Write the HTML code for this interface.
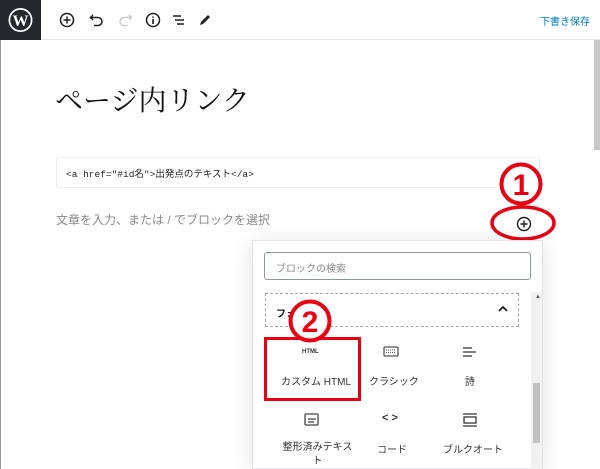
<!DOCTYPE html>
<html><head><meta charset="utf-8"><style>
*{margin:0;padding:0;box-sizing:border-box}
body{width:600px;height:469px;overflow:hidden;background:#fff;position:relative;font-family:"Liberation Sans","Noto Sans CJK JP",sans-serif;color:#1e1e1e}
.abs{position:absolute}
.top{left:0;top:0;width:600px;height:40px;border-bottom:1px solid #e2e4e7;background:#fff}
.logo{left:0;top:0;width:41px;height:40px;background:#23282d}
.ic{top:11px;width:18px;height:18px}
</style></head><body>
<div class="abs top"></div>
<div class="abs logo"><svg width="41" height="40"><circle cx="20.5" cy="20" r="12" fill="#fff"/><circle cx="20.5" cy="20" r="10.3" fill="#23282d"/><text x="20.5" y="26" text-anchor="middle" font-family="Liberation Serif" font-weight="bold" font-size="16" fill="#fff">W</text></svg></div>
<svg class="abs ic" style="left:58px" viewBox="0 0 18 18"><circle cx="9" cy="9" r="6.5" fill="none" stroke="#1e1e1e" stroke-width="1.5"/><path d="M9 5.5v7M5.5 9h7" stroke="#1e1e1e" stroke-width="1.5"/></svg>
<svg class="abs ic" style="left:88px" viewBox="0 0 18 18"><path d="M5 4L2.5 6.5 5 9M3 6.5h7a4 4 0 010 8H6" fill="none" stroke="#1e1e1e" stroke-width="1.5"/></svg>
<svg class="abs ic" style="left:116px" viewBox="0 0 18 18"><path d="M13 4l2.5 2.5L13 9M15 6.5H8a4 4 0 000 8h4" fill="none" stroke="#ccc" stroke-width="1.5"/></svg>
<svg class="abs ic" style="left:144px" viewBox="0 0 18 18"><circle cx="9" cy="9" r="6.5" fill="none" stroke="#1e1e1e" stroke-width="1.5"/><path d="M9 8v5M9 5.5v1.3" stroke="#1e1e1e" stroke-width="1.6"/></svg>
<svg class="abs ic" style="left:170px" viewBox="0 0 18 18"><path d="M3 5h8M5 9h9M7 13h7" stroke="#1e1e1e" stroke-width="1.4"/></svg>
<svg class="abs ic" style="left:196px" viewBox="0 0 18 18"><path d="M4 14l1-3 7-7 2 2-7 7z" fill="#1e1e1e"/></svg>
<div class="abs" style="right:10px;top:13px;font-size:10px;color:#007cba">下書き保存</div>
<div class="abs" style="left:0;top:40px;width:1px;height:429px;background:#999"></div>
<div class="abs" style="left:594px;top:40px;width:6px;height:110px;background:#c8c8c8"></div>
<div class="abs" style="left:55px;top:79px;font-size:28px;font-family:'Liberation Serif','Noto Serif CJK SC',serif;color:#111">ページ内リンク</div>
<div class="abs" style="left:56px;top:157px;width:484px;height:31px;border:1px solid #eee;border-radius:2px;font-family:'Liberation Mono','Noto Sans CJK JP',monospace;font-size:9.5px;padding:8px 9px;color:#1e1e1e">&lt;a href="#id名"&gt;出発点のテキスト&lt;/a&gt;</div>
<div class="abs" style="left:56px;top:211px;font-size:12px;color:#8a8a8a">文章を入力、または / でブロックを選択</div>
<svg class="abs" style="left:490px;top:196px" width="70" height="46"><ellipse cx="33" cy="27" rx="31" ry="16" fill="none" stroke="#e60012" stroke-width="3.5"/><circle cx="34" cy="28" r="6.5" fill="none" stroke="#1e1e1e" stroke-width="1.4"/><path d="M34 24.5v7M30.5 28h7" stroke="#1e1e1e" stroke-width="1.4"/></svg>
<svg class="abs" style="left:499px;top:162px" width="46" height="46"><circle cx="22" cy="22" r="19.5" fill="#fff" stroke="#e60012" stroke-width="4"/><text x="22" y="33" text-anchor="middle" font-family="Liberation Sans" font-weight="bold" font-size="30" fill="#e60012">1</text></svg>
<div class="abs" style="left:252px;top:240px;width:291px;height:229px;background:#fff;border:1px solid #e2e4e7;box-shadow:0 3px 20px rgba(0,0,0,.12)"></div>
<div class="abs" style="left:264px;top:252px;width:267px;height:28px;border:1px solid #8d96a0;border-radius:3px;font-size:10px;color:#888;padding:7px 11px">ブロックの検索</div>
<div class="abs" style="left:265px;top:293px;width:254px;height:34px;border:1px dashed #aaa;font-size:10px;font-weight:bold;padding:11px 10px">フォ</div>
<svg class="abs" style="left:497px;top:304px" width="12" height="10"><path d="M2 7l4-4 4 4" fill="none" stroke="#1e1e1e" stroke-width="1.8"/></svg>
<div class="abs" style="left:531px;top:292px;width:11px;height:177px;background:#f1f1f1"></div>
<div class="abs" style="left:533px;top:383px;width:7px;height:60px;background:#c1c1c1"></div>
<div class="abs" style="left:535px;top:294px;font-size:6px;color:#555">▲</div>
<div class="abs" style="left:264px;top:337px;width:97px;height:64px;border:3px solid #e60012"></div>
<svg class="abs" style="left:287px;top:299px" width="46" height="46"><circle cx="23" cy="22" r="19.5" fill="#fff" stroke="#e60012" stroke-width="4"/><text x="23" y="33" text-anchor="middle" font-family="Liberation Sans" font-weight="bold" font-size="30" fill="#e60012">2</text></svg>
<div class="abs" style="left:302px;top:349px;font-size:6px;font-weight:bold;color:#333">HTML</div>
<div class="abs" style="left:281px;top:373px;font-size:10px;color:#333">カスタム HTML</div>
<svg class="abs" style="left:383px;top:346px" width="16" height="12"><rect x="1" y="1" width="14" height="9" rx="1" fill="none" stroke="#555" stroke-width="1.3"/><path d="M3 4h10M3 6.5h10" stroke="#555" stroke-dasharray="1 1"/></svg>
<div class="abs" style="left:369px;top:373px;font-size:10px;color:#333">クラシック</div>
<svg class="abs" style="left:462px;top:346px" width="16" height="12"><path d="M1 2h9M1 6h13M1 10h9" stroke="#333" stroke-width="1.3"/></svg>
<div class="abs" style="left:465px;top:373px;font-size:10px;color:#333">詩</div>
<svg class="abs" style="left:304px;top:413px" width="16" height="14"><rect x="1" y="1" width="13" height="11" rx="1" fill="none" stroke="#444" stroke-width="1.3"/><path d="M4 6h8M4 9h6" stroke="#444" stroke-width="1.2"/></svg>
<div class="abs" style="left:280px;top:441px;font-size:10px;color:#333;line-height:14px;width:75px;text-align:center">整形済みテキスト</div>
<div class="abs" style="left:382px;top:412px;font-size:11px;color:#333;font-weight:bold">&lt;&nbsp;&gt;</div>
<div class="abs" style="left:377px;top:441px;font-size:10px;color:#333">コード</div>
<svg class="abs" style="left:462px;top:413px" width="16" height="14"><path d="M1 1h14M1 13h14" stroke="#333" stroke-width="1.3"/><rect x="2" y="4" width="12" height="6" fill="none" stroke="#333" stroke-width="1.3"/></svg>
<div class="abs" style="left:443px;top:441px;font-size:10px;color:#333">ブルクオート</div>
</body></html>
